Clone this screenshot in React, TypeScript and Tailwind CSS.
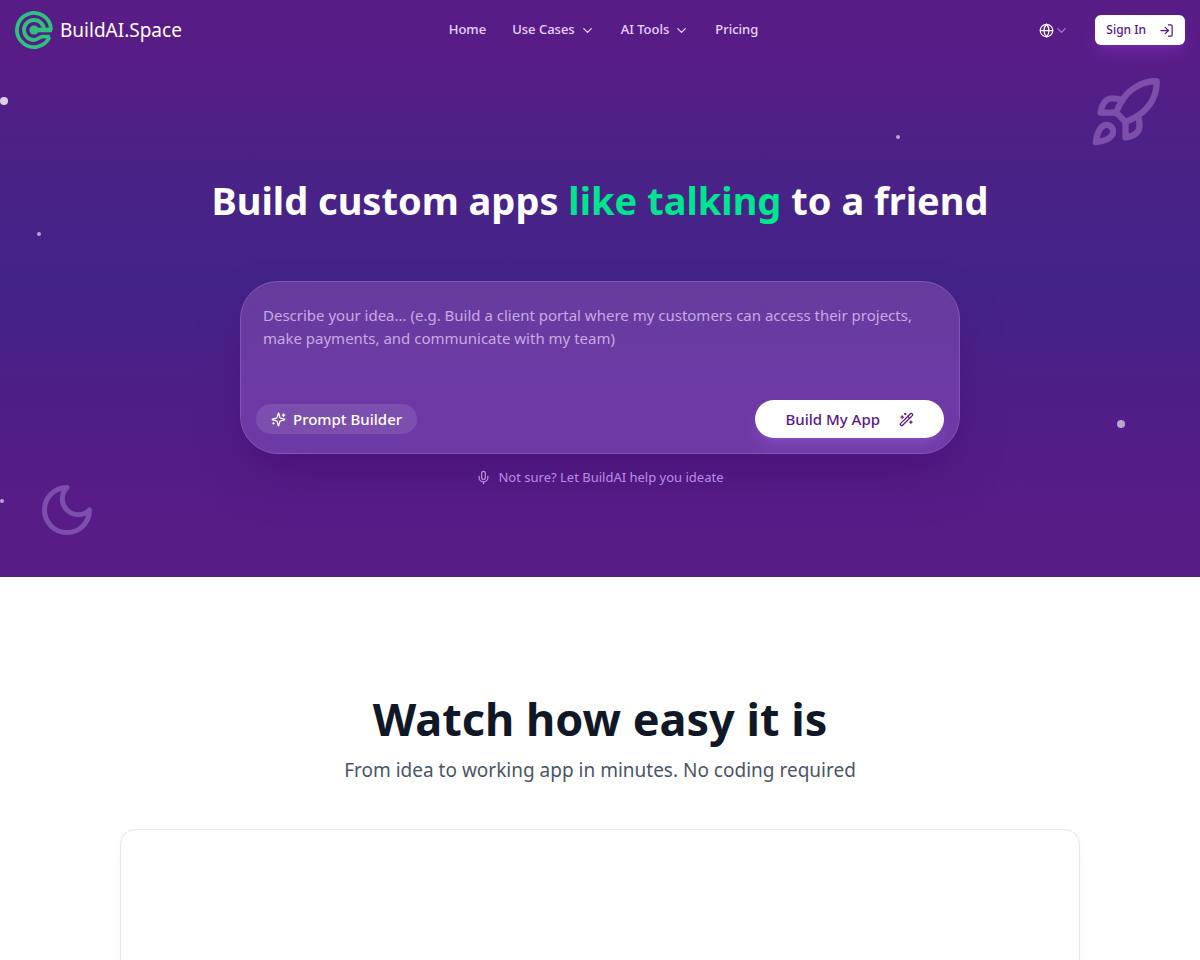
import React from 'react';
import { ChevronDown, Globe, LogIn, Mic, WandSparkles } from 'lucide-react';

const Logo = () => (
  <svg viewBox="0 0 38 38" fill="none" stroke="#2ec27e" strokeWidth="3.8" className="size-[38px]">
    <path d="M36 19A17 17 0 1 0 34.5 26" />
    <path d="M29 19A10 10 0 1 0 19 29C23 29 24 25.6 28 25.6H35" />
    <path d="M19 19H37" strokeWidth="4.6" />
    <circle cx="19" cy="19" r="4.6" fill="#2ec27e" stroke="none" />
  </svg>
);

const Sparkles = () => (
  <svg viewBox="0 0 24 24" fill="none" stroke="currentColor" strokeWidth="2" strokeLinecap="round" strokeLinejoin="round" className="size-[15px]">
    <path d="M9.937 15.5A2 2 0 0 0 8.5 14.063l-6.135-1.582a.5.5 0 0 1 0-.962L8.5 9.936A2 2 0 0 0 9.937 8.5l1.582-6.135a.5.5 0 0 1 .963 0L14.063 8.5A2 2 0 0 0 15.5 9.937l6.135 1.581a.5.5 0 0 1 0 .964L15.5 14.063a2 2 0 0 0-1.437 1.437l-1.582 6.135a.5.5 0 0 1-.963 0z" />
    <path d="M20 3v4M22 5h-4M4 17v2M5 18H3" />
  </svg>
);

const Moon = () => (
  <svg viewBox="0 0 24 24" fill="none" stroke="currentColor" strokeWidth="2" strokeLinecap="round" strokeLinejoin="round" className="absolute bottom-[37px] left-[37px] size-[60px] text-[#7d4fab]">
    <path d="M12 3a6 6 0 0 0 9 9 9 9 0 1 1-9-9Z" />
  </svg>
);

const Rocket = () => (
  <svg viewBox="0 0 24 24" fill="none" stroke="currentColor" strokeWidth="2" strokeLinecap="round" strokeLinejoin="round" className="absolute top-[75px] right-[37px] size-[75px] text-[#7d4fab]">
    <path d="M4.5 16.5c-1.5 1.26-2 5-2 5s3.74-.5 5-2c.71-.84.7-2.13-.09-2.91a2.18 2.18 0 0 0-2.91-.09z" />
    <path d="m12 15-3-3a22 22 0 0 1 2-3.95A12.88 12.88 0 0 1 22 2c0 2.72-.78 7.5-6 11a22.35 22.35 0 0 1-4 2z" />
    <path d="M9 12H4s.55-3.03 2-4c1.62-1.08 5 0 5 0" />
    <path d="M12 15v5s3.03-.55 4-2c1.08-1.62 0-5 0-5" />
  </svg>
);

const navLinks = [
  { label: 'Home', hasMenu: false },
  { label: 'Use Cases', hasMenu: true },
  { label: 'AI Tools', hasMenu: true },
  { label: 'Pricing', hasMenu: false },
];

const Header = () => (
  <header className="grid h-[60px] grid-cols-[1fr_auto_1fr] items-center px-[15px]">
    <a href="#" className="flex items-center gap-[7px] text-[19px] text-white">
      <Logo />
      BuildAI.Space
    </a>
    <nav className="flex items-center gap-[26px] pl-[7px] text-[13px] font-medium text-purple-200">
      {navLinks.map((link) =>
        link.hasMenu ? (
          <button key={link.label} className="flex items-center gap-[5px]">
            {link.label}
            <ChevronDown size={15} />
          </button>
        ) : (
          <a key={link.label} href="#">
            {link.label}
          </a>
        )
      )}
    </nav>
    <div className="flex items-center gap-[26px] justify-self-end">
      <button aria-label="Language" className="flex items-center text-white">
        <Globe size={15} />
        <ChevronDown size={15} className="text-[#a67fd0]" />
      </button>
      <button className="flex h-[30px] items-center gap-[13px] rounded-md bg-white px-[11px] text-[12px] font-medium text-purple-900 shadow-lg shadow-purple-500/20">
        Sign In
        <LogIn size={15} />
      </button>
    </div>
  </header>
);

const Decorations = () => (
  <div aria-hidden="true" className="pointer-events-none absolute inset-0 overflow-hidden">
    <span className="absolute top-[97px] left-0 size-2 rounded-full bg-white/80" />
    <span className="absolute top-[135px] left-[896px] size-1 rounded-full bg-white/60" />
    <span className="absolute top-[232px] left-[37px] size-1 rounded-full bg-white/60" />
    <span className="absolute top-[420px] left-[1117px] size-2 rounded-full bg-white/60" />
    <span className="absolute top-[499px] left-0 size-1 rounded-full bg-white/60" />
    <Rocket />
    <Moon />
  </div>
);

const PromptBox = () => (
  <form
    onSubmit={(e) => e.preventDefault()}
    className="flex h-[173px] w-full max-w-[720px] flex-col justify-between rounded-[38px] border border-[#8355b5] bg-linear-to-b from-[#653c9c] to-[#6d3aa5] to-60% p-[15px] shadow-2xl shadow-purple-950/50"
  >
    <textarea
      aria-label="Describe your idea"
      placeholder="Describe your idea... (e.g. Build a client portal where my customers can access their projects, make payments, and communicate with my team)"
      className="h-20 w-full resize-none bg-transparent px-[7px] pt-[7px] text-[15px] leading-[23px] text-white outline-none placeholder:text-[#c9a9e4]"
    />
    <div className="flex items-center justify-between">
      <button type="button" className="flex h-[30px] items-center gap-[7px] rounded-full bg-white/10 px-[15px] text-[15px] font-medium text-white">
        <Sparkles />
        Prompt Builder
      </button>
      <button type="submit" className="flex h-[38px] items-center gap-[19px] rounded-full bg-white px-[30px] text-[15px] font-medium text-purple-900 shadow-lg shadow-purple-400/20">
        Build My App
        <WandSparkles size={15} />
      </button>
    </div>
  </form>
);

const App: React.FC = () => {
  return (
    <div className="min-h-screen bg-white font-['Noto_Sans',sans-serif]">
      <section className="relative bg-[linear-gradient(to_bottom,#581c87_10%,#4b2286_26%,#432389_50%,#4f1e86_72%,#581c87_88%)] pb-[90px]">
        <Decorations />
        <div className="relative">
          <Header />
          <div className="flex flex-col items-center px-4 pt-[117px]">
            <h1 className="text-center text-[38px] leading-[47px] font-bold text-white">
              Build custom apps <span className="text-[#00e58f]">like talking</span> to a friend
            </h1>
            <div className="flex w-full justify-center pt-[57px]">
              <PromptBox />
            </div>
            <button className="mt-[13px] flex items-center gap-[7px] text-[13px] leading-[20px] text-[#b98fe0]">
              <Mic size={15} />
              Not sure? Let BuildAI help you ideate
            </button>
          </div>
        </div>
      </section>

      <section className="flex flex-col items-center px-4 pt-[112px]">
        <h2 className="text-[45px] leading-[60px] font-bold text-gray-900">Watch how easy it is</h2>
        <p className="mt-2 text-[19px] leading-[26px] text-gray-600">From idea to working app in minutes. No coding required</p>
        <div className="mt-[46px] h-[540px] w-full max-w-[960px] rounded-[15px] border border-gray-200 shadow-lg shadow-black/5" />
      </section>
    </div>
  );
};

export default App;
